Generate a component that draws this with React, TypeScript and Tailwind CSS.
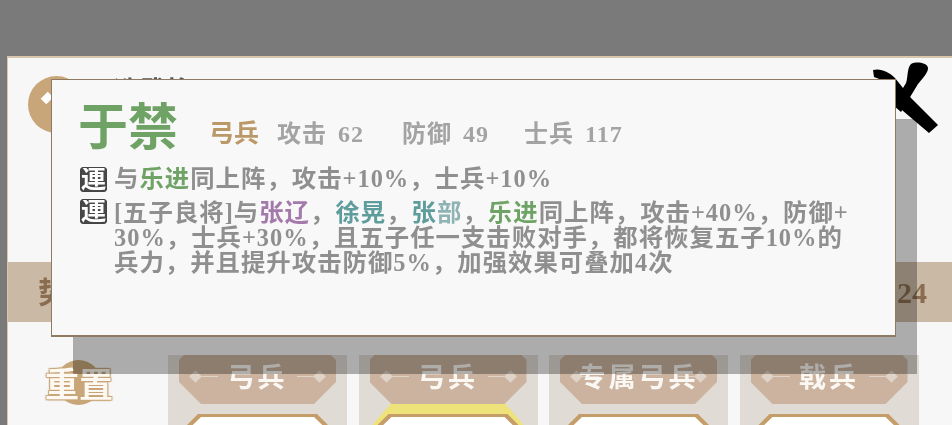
const SERIF = 'font-["Liberation_Serif","Noto_Sans_CJK_SC",serif]';

const TROOPS = [
  { label: '弓兵', selected: false },
  { label: '弓兵', selected: true },
  { label: '专属弓兵', selected: false },
  { label: '戟兵', selected: false },
];

function LinkBadge() {
  return (
    <span className="flex h-[25px] w-[27px] shrink-0 items-center justify-center overflow-hidden rounded-[3px] border border-[#444] bg-[#484848] text-[25px] leading-none font-bold text-white">
      連
    </span>
  );
}

function Stat({ label, value }: { label: string; value: number }) {
  return (
    <span className="flex items-baseline gap-[11px] text-[24px] leading-none font-bold tracking-[1px] text-[#a3a3a3]">
      <span>{label}</span>
      <span>{value}</span>
    </span>
  );
}

function TroopColumn({ label, selected }: { label: string; selected: boolean }) {
  return (
    <div className="flex h-[70px] w-[179px] flex-col items-center overflow-hidden bg-[#e0dbd5]">
      <div className="relative flex h-[49px] w-[157px] shrink-0 justify-center bg-[#cbb3a0] pt-[8px] [clip-path:polygon(5px_0,152px_0,157px_5px,157px_27px,135px_49px,22px_49px,0_27px,0_5px)]">
        <div className="absolute inset-x-[12px] top-[17px] flex items-center justify-between">
          <span className="flex items-center">
            <span className="h-[9px] w-[9px] rotate-45 bg-[#e0d4c8]" />
            <span className="ml-[2px] h-[1px] w-[16px] bg-[#e0d4c8]" />
          </span>
          <span className="flex items-center">
            <span className="mr-[2px] h-[1px] w-[16px] bg-[#e0d4c8]" />
            <span className="h-[9px] w-[9px] rotate-45 bg-[#e0d4c8]" />
          </span>
        </div>
        <span className="relative text-[27px] leading-[30px] font-bold tracking-[3px] whitespace-nowrap text-[#fbf8f4]">{label}</span>
      </div>
      <div className="relative mt-[10px] h-[30px] w-full shrink-0">
        {selected && (
          <div className="absolute inset-x-0 -top-[10px] h-[40px] bg-[#eee27a] [clip-path:polygon(32px_0,147px_0,179px_37px,179px_40px,0_40px,0_37px)]" />
        )}
        <div className="absolute inset-x-0 inset-y-0 bg-[#c49d68] [clip-path:polygon(30px_0,149px_0,179px_30px,0_30px)]" />
        <div className="absolute inset-x-[5px] top-[3px] bottom-0 bg-white [clip-path:polygon(28px_0,141px_0,169px_27px,0_27px)]" />
      </div>
    </div>
  );
}

export default function App() {
  return (
    <div className={`relative h-[425px] w-[952px] overflow-hidden bg-[#7b7a7a] ${SERIF}`}>
      <div className="absolute inset-0 blur-[0.5px]">
        <div className="h-[56px]" />
        {/* page behind the popup */}
        <div className="ml-[7px] flex h-[369px] flex-col border-t-2 border-l border-[#d8c7ac] bg-[#f7f7f7]">
          <div className="flex h-[204px] shrink-0 items-start pt-[18px] pl-[20px]">
            <div className="flex h-[57px] w-[57px] items-start rounded-full bg-[#c8a679] pt-[17px] pl-[15px]">
              <span className="h-[10px] w-[8px] rotate-45 bg-white" />
            </div>
            <span className="mt-[3px] ml-[28px] text-[26px] leading-none font-bold text-[#555]">选武将</span>
          </div>
          <div className="flex h-[60px] shrink-0 items-center justify-between bg-[#c9b9a5] pr-[25px] pl-[30px] text-[#8a6d50]">
            <span className="text-[30px] font-bold">势</span>
            <span className="text-[30px] font-bold">24</span>
          </div>
          <div className="flex flex-1 items-start pt-[33px] pl-[37px]">
            <div className="relative mt-[5px] flex h-[45px] w-[68px] items-center justify-center">
              <div className="absolute top-0 left-[11px] h-[45px] w-[45px] rounded-full bg-[#c8a679]" />
              <span className="relative mt-[6px] text-[34px] leading-none font-bold whitespace-nowrap text-[#fdf9f2] [text-shadow:1px_1px_1px_#c8a679,-1px_-1px_1px_#c8a679,1px_-1px_1px_#c8a679,-1px_1px_1px_#c8a679]">
                重置
              </span>
            </div>
            <div className="ml-[55px] flex gap-[11.5px]">
              {TROOPS.map((t, i) => (
                <TroopColumn key={i} label={t.label} selected={t.selected} />
              ))}
            </div>
          </div>
        </div>

        {/* close X */}
        <svg className="absolute top-[60px] left-[865px]" width="80" height="80" viewBox="0 0 80 80">
          <path d="M8 10c8-2 16 2 22 8l16 20 27 27-9 8-33-28L22 22 9 17z" fill="#000" />
          <path d="M46 4c6-3 18-1 17 5-1 5-6 10-10 15L36 52l-8-7 13-22c2-6 1-15 5-19z" fill="#000" />
        </svg>

        {/* popup shadow */}
        <div className="absolute top-[119px] left-[73px] h-[255px] w-[844px] bg-black/30" />

        {/* popup */}
        <div className="absolute top-[79px] left-[51px] h-[258px] w-[845px] border border-b-2 border-[#8f7a62] bg-[#f8f8f8] pt-[18px] pl-[28px]">
          <div className="flex items-end">
            <span className="-ml-[2px] text-[50px] leading-[60px] font-bold text-[#6fa365]">于禁</span>
            <span className="mb-[12px] ml-[31px] text-[25px] leading-none font-bold text-[#bb9868]">弓兵</span>
            <div className="mb-[12px] ml-[18px] flex gap-[38px]">
              <Stat label="攻击" value={62} />
              <Stat label="防御" value={49} />
              <div className="-ml-[3px]">
                <Stat label="士兵" value={117} />
              </div>
            </div>
          </div>
          <div className="mt-[8px] flex h-[27px] items-center gap-[7px]">
            <LinkBadge />
            <p className="text-[24.4px] leading-none font-bold tracking-[1px] whitespace-nowrap text-[#8f8f8f]">
              与<span className="text-[#6fa365]">乐进</span>同上阵，攻击+10%，士兵+10%
            </p>
          </div>
          <div className="mt-[6px] flex gap-[7px]">
            <LinkBadge />
            <p className="pt-[1px] text-[24.4px] leading-[25px] font-bold tracking-[1px] whitespace-nowrap text-[#8f8f8f]">
              [五子良将]与<span className="text-[#a479ab]">张辽</span>，<span className="text-[#5f9c9c]">徐晃</span>，<span className="text-[#5f9c9c]">张</span><span className="text-[#8fb3b3]">部</span>，<span className="text-[#6fa365]">乐进</span>同上阵，攻击+40%，防御+
              <br />
              30%，士兵+30%，且五子任一支击败对手，都将恢复五子10%的
              <br />
              兵力，并且提升攻击防御5%，加强效果可叠加4次
            </p>
          </div>
        </div>
      </div>
    </div>
  );
}
